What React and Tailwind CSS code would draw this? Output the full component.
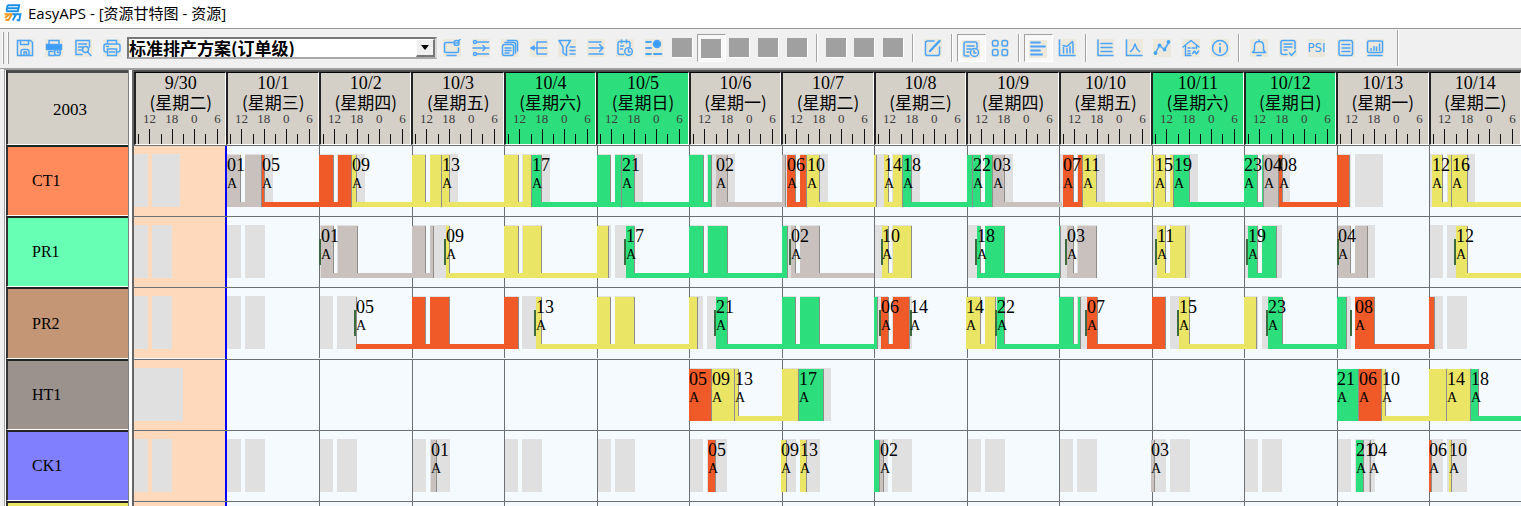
import React from "react";

const ORIGIN = 134;
const SPAN = 1387;
const pct = (x) => `${((x - ORIGIN) / SPAN) * 100}%`;
const wid = (w) => `${(w / SPAN) * 100}%`;

const O = "#f05a28";
const Y = "#ebe566";
const G = "#2ddf7c";
const T = "#c9c1bd";

const days = [
  ["9/30", "二"], ["10/1", "三"], ["10/2", "四"], ["10/3", "五"], ["10/4", "六"],
  ["10/5", "日"], ["10/6", "一"], ["10/7", "二"], ["10/8", "三"], ["10/9", "四"],
  ["10/10", "五"], ["10/11", "六"], ["10/12", "日"], ["10/13", "一"], ["10/14", "二"],
];

const allDays = days.map((_, i) => i);

// task: [label, colour, setup start, work segments, end of task]
const resources = [
  {
    name: "CT1", bg: "bg-[#ff8a5c]", days: allDays, shifts: [[0, 14], [18, 46]],
    tasks: [
      ["01", T, 0, [[227, 241], [245, 262]]],
      ["05", O, 0, [[262, 265], [319, 334], [338, 352]]],
      ["09", Y, 0, [[352, 357], [412, 426], [430, 442]]],
      ["13", Y, 0, [[442, 450], [504, 519], [523, 532]]],
      ["17", G, 0, [[532, 542], [597, 611], [615, 622]]],
      ["21", G, 0, [[622, 635], [689, 704], [708, 712]]],
      ["02", T, 0, [[716, 728], [782, 786]]],
      ["06", O, 0, [[787, 796], [800, 807]]],
      ["10", Y, 0, [[807, 820], [874, 877]]],
      ["14", Y, 0, [[884, 889], [893, 903]]],
      ["18", G, 0, [[903, 912], [967, 973]]],
      ["22", G, 0, [[973, 981], [985, 993]]],
      ["03", T, 0, [[993, 1005]], 1062],
      ["07", O, 0, [[1063, 1074], [1078, 1083]]],
      ["11", Y, 0, [[1083, 1097]], 1152],
      ["", Y, 0, [[1151, 1154]]],
      ["15", Y, 0, [[1155, 1166], [1170, 1174]]],
      ["19", G, 0, [[1174, 1190]], 1244],
      ["23", G, 0, [[1244, 1258], [1262, 1264]]],
      ["04", T, 0, [[1264, 1279]]],
      ["08", O, 0, [[1279, 1283], [1337, 1350]]],
      ["12", Y, 0, [[1432, 1443], [1448, 1452]]],
      ["16", Y, 0, [[1452, 1468]], 1530],
    ],
  },
  {
    name: "PR1", bg: "bg-[#66ffb3]", days: allDays, shifts: [[0, 14], [18, 38]],
    tasks: [
      ["01", T, 319, [[321, 334], [338, 358], [412, 426], [430, 434]]],
      ["09", Y, 444, [[446, 450], [504, 519], [523, 542], [597, 609]]],
      ["17", G, 624, [[626, 635], [689, 704], [708, 728], [782, 788]]],
      ["02", T, 789, [[791, 796], [800, 820]], 874],
      ["10", Y, 881, [[882, 889], [893, 912]]],
      ["18", G, 975, [[977, 981], [985, 1005]], 1061],
      ["", G, 0, [[1059, 1061]]],
      ["03", T, 1065, [[1067, 1074], [1078, 1097]]],
      ["11", Y, 1155, [[1157, 1166], [1170, 1186]]],
      ["19", G, 1246, [[1248, 1258], [1262, 1277]]],
      ["04", T, 1337, [[1338, 1351], [1355, 1368]]],
      ["12", Y, 1454, [[1456, 1468]], 1530],
    ],
  },
  {
    name: "PR2", bg: "bg-[#c49675]", days: allDays, shifts: [[0, 14], [18, 38]],
    tasks: [
      ["05", O, 354, [[356, 357], [412, 426], [430, 450], [504, 519]]],
      ["13", Y, 534, [[536, 542], [597, 611], [615, 635], [689, 698]]],
      ["21", G, 714, [[716, 728], [782, 796], [800, 820], [874, 878]]],
      ["06", O, 879, [[881, 889], [893, 910]]],
      ["14", Y, 910, [[910, 910]]],
      ["14", Y, 0, [[966, 981], [985, 996]]],
      ["22", G, 995, [[997, 1005], [1059, 1074], [1078, 1081]]],
      ["07", O, 1085, [[1087, 1098], [1152, 1166]]],
      ["15", Y, 1177, [[1179, 1190], [1244, 1257]]],
      ["23", G, 1266, [[1268, 1283], [1337, 1347]]],
      ["", O, 1350, [[1350, 1350]]],
      ["08", O, 0, [[1355, 1375], [1429, 1435]]],
    ],
  },
  {
    name: "HT1", bg: "bg-[#9b928e]", days: [0, 6, 7], shifts: [[0, 49]],
    tasks: [
      ["05", O, 0, [[689, 712]]],
      ["09", Y, 0, [[712, 735]]],
      ["13", Y, 0, [[735, 739], [782, 799]]],
      ["17", G, 0, [[799, 824]]],
      ["21", G, 0, [[1337, 1359]]],
      ["06", O, 0, [[1359, 1382]]],
      ["10", Y, 0, [[1382, 1386], [1429, 1447]]],
      ["14", Y, 0, [[1447, 1471]]],
      ["18", G, 0, [[1471, 1479]], 1530],
    ],
  },
  {
    name: "CK1", bg: "bg-[#8080ff]", days: allDays, shifts: [[0, 14], [18, 38]],
    tasks: [
      ["01", T, 0, [[431, 437]]],
      ["05", O, 0, [[708, 716]]],
      ["09", Y, 0, [[781, 787]]],
      ["13", Y, 0, [[800, 807]]],
      ["", G, 0, [[874, 880]]],
      ["02", T, 0, [[880, 884]]],
      ["03", T, 0, [[1151, 1155]]],
      ["21", G, 0, [[1356, 1364]]],
      ["04", T, 0, [[1369, 1371]]],
      ["06", O, 0, [[1429, 1432]]],
      ["10", Y, 0, [[1449, 1452]]],
    ],
  },
];

function Task({ task }) {
  const [, color, setup, parts, finish] = task;
  const start = parts[0][0];
  const end = finish || parts[parts.length - 1][1];
  return (
    <g shapeRendering="crispEdges">
      {end > start && <rect x={pct(start)} y="57" width={wid(end - start)} height="5" fill={color} />}
      {parts.filter(([a, b]) => b > a).map(([a, b]) => (
        <g key={a}>
          <rect x={pct(a)} y="10" width={wid(b - a)} height="52" fill={color} />
          <rect x={pct(b - 1)} y="10" width="1" height={b < end ? 47 : 52} fill="#8f8d8a" />
        </g>
      ))}
      {setup > 0 && <rect x={pct(setup)} y="23" width="2" height="26" fill="#3c6b40" />}
    </g>
  );
}

function Lane({ res }) {
  return (
    <svg className="block h-full w-full" role="img" aria-label={res ? res.name : undefined}>
      <g shapeRendering="crispEdges">
        <rect x="0" y="0" width={wid(92.5)} height="100%" fill="#ffd9bb" />
        {res && res.days.map((d) =>
          res.shifts.map(([a, b]) => (
            <rect key={`${d}-${a}`} x={pct(ORIGIN + d * 92.5 + a)} y="9" width={wid(b - a)} height="53" fill="#e0e0e0" />
          ))
        )}
        <rect x="0" y="0" width="100%" height="1" fill="#6c7074" />
        {allDays.slice(2).map((d) => (
          <rect key={d} x={pct(ORIGIN + d * 92.5)} y="0" width="1" height="100%" fill="#6c7074" />
        ))}
        <rect x={pct(225)} y="1" width="2" height="100%" fill="#0000ff" />
      </g>
      {res && res.tasks.map((t, i) => <Task key={i} task={t} />)}
      {res && (
        <g fill="#000" className="font-['Liberation_Serif',serif]">
          {res.tasks.filter((t) => t[0]).map((t) => (
            <g key={t[3][0][0]}>
              <text x={pct(t[3][0][0])} y="26" fontSize="18">{t[0]}</text>
              <text x={pct(t[3][0][0])} y="43" fontSize="14">A</text>
            </g>
          ))}
        </g>
      )}
    </svg>
  );
}

function DayHeader({ date, week, weekend }) {
  return (
    <div className={`flex flex-col items-center overflow-hidden border-l-2 border-t border-r border-b border-l-[#222] border-t-black border-r-white border-b-white ${weekend ? "bg-[#2ddf7c]" : "bg-[#d4d0c8]"}`}>
      <span className="h-5 whitespace-nowrap font-['Liberation_Serif',serif] text-[18px] leading-5">{date}</span>
      <span className="h-[18px] whitespace-nowrap font-['Noto_Sans_CJK_SC',sans-serif] text-[17px] leading-[18px]">(星期{week})</span>
      <svg className="block w-full flex-1" aria-hidden="true">
        <g fontSize="13" fill="#3d3d3d" textAnchor="middle" className="font-['Liberation_Serif',serif]">
          <text x="15%" y="12">12</text>
          <text x="40%" y="12">18</text>
          <text x="65%" y="12">0</text>
          <text x="91%" y="12">6</text>
        </g>
        <g shapeRendering="crispEdges">
          {[0, 1, 2, 3, 4, 5, 6, 7].map((k) => (
            <rect key={k} x={`${2.5 + k * 12.5}%`} y={k % 2 ? 18 : 23} width="1" height="20" fill="#111" />
          ))}
        </g>
      </svg>
    </div>
  );
}

const icons = {
  save: <><path d="M1.5 1.5h13l2 2v13h-15z" /><path d="M4.5 1.5v4h8v-4M5 16.5v-4q0-2 2-2h4q2 0 2 2v4M8 16v-3h2.500v3" /></>,
  printPreview: <><path d="M4 5V1.500h10V5M4 13v3.500h6" /><path d="M1.500 5.500h15v5h-15z" fill="#3d9bfa" /><circle cx="12.500" cy="13.500" r="3" fill="#ece9dc" /><path d="M12.500 12v1.500H14M4 12.500h4" /></>,
  search: <><path d="M8 15.500H2v-14h13.500V8M4.500 5h8M4.500 8h4M4.500 11h3" /><circle cx="11.500" cy="10.500" r="3" /><path d="m13.500 13 3.500 3.500" /></>,
  print: <><path d="M4.500 5V1.500h9V5M4.500 13H3q-2 0-2-2V7q0-2 2-2h12q2 0 2 2v4q0 2-2 2h-1.500" /><path d="M4.500 10h9v6.500h-9zM6.500 13h5M3.500 7.500h2" /></>,
  screen: <><path d="M10 3.500H3q-1.500 0-1.500 1.500v7q0 1.500 1.500 1.500h11q1.500 0 1.500-1.500V9M4 16.500h9" /><circle cx="13.500" cy="4" r="2.500" /><path d="M12.500 4h2M15.500 2l1.500-1.500" /></>,
  sliders: <><path d="M5 3h11.500M1 9h11M5 15h11.500M11 6.500 13.500 9 11 11.500" /><circle cx="3" cy="3" r="1.500" /><circle cx="3" cy="15" r="1.500" /><path d="M14.500 9H17" /></>,
  copy: <><rect x="1.500" y="5.500" width="11" height="11" rx="2" /><path d="M4 3.500h8.500q2 0 2 2V14M6.500 1.500h8q2 0 2 2V12M4 9h6M4 11.500h6M4 14h4" /></>,
  tree: <><path d="M7 3h9.500M1 9h15.500M7 15h9.500M7 3v12" /><path d="M1 9l3-2v4z" fill="#3d9bfa" /></>,
  filter: <><path d="M1 1.500h11.500L8.500 8v8.500L5 14V8zM12 8h5M12 11.500h5M12 15h5" /></>,
  arrowLines: <><path d="M2 3h12M2 9h14M2 15h14M12.500 5.500 16 9l-3.500 3.500" /></>,
  clockDoc: <><path d="M7.500 15.500H4q-2 0-2-2v-9q0-2 2-2h8q2 0 2 2v3M5.500 1v3M10.500 1v3M4.500 7h3M4.500 10h2" /><circle cx="12.500" cy="12.500" r="3.800" /><path d="M12.500 10.500v2.500H14" /></>,
  dot: <><path d="M1 3h5M1 9h5M1 15h5M9 15h7.500" strokeWidth="1.800" /><circle cx="12" cy="5" r="3.500" fill="#3d9bfa" /></>,
  edit: <><path d="M10 2H3.500q-2 0-2 2v10.500q0 2 2 2h10q2 0 2-2V8" /><path d="m6 12 9.500-10" strokeWidth="2.500" /></>,
  docClock: <><path d="M7 16H4q-2 0-2-2V4q0-2 2-2h9q2 0 2 2v4M5 6h7M5 9h4M5 12h2" /><circle cx="12.500" cy="12.500" r="4" /><path d="M12 10.500v2.500h2" /></>,
  grid: <><rect x="1.500" y="1.500" width="5.500" height="5.500" rx="1.800" /><rect x="11" y="1.500" width="5.500" height="5.500" rx="1.800" /><rect x="1.500" y="10.500" width="5.500" height="6" rx="1.800" /><rect x="11" y="10.500" width="5.500" height="6" rx="1.800" /></>,
  alignLeft: <><path d="M2 2.500h9M2 6.500h14M2 10.500h9M2 14.500h11" strokeWidth="1.800" /></>,
  chartBars: <><path d="M1.500 1v15.500H17M5.500 14V8.500M9 14V9.500M12 14V7.500M15 14V4M5 6.500l4 1 5.500-5" /></>,
  listAxis: <><path d="M2 1v15.500h15M5 4.500h11M5 8.500h11M5 12.500h11" /></>,
  peak: <><path d="M1.500 1v15.500H17M5.500 12.500 8 10l2-5 2 5 2.500 2.500" /></>,
  line: <><path d="M2 14.500 6.500 6.500l5 4L16 3" /><g fill="#3d9bfa"><circle cx="2.500" cy="14" r="1.200" /><circle cx="6.500" cy="6.500" r="1.200" /><circle cx="11.500" cy="10.500" r="1.200" /><circle cx="15.500" cy="3" r="1.200" /></g></>,
  house: <><path d="M1 8 9 1.500 17 8M3.500 7v9.500H9M6 9h2M10 9h3M6 12h2M6 14.500h2M14.500 7v2.500M10.500 14.500l2-2.500 2 3 2-3" /></>,
  info: <><circle cx="9" cy="9" r="7.500" /><path d="M9 8.500v4.500M9 5v.3" strokeWidth="1.800" /></>,
  bell: <><path d="M2.500 13.500h13l-2-2.500V7q0-4.500-4.500-4.500T4.500 7v4zM9 1v1.500M7 16.500h4" /></>,
  note: <><path d="M8 15.500H4q-2 0-2-2v-10q0-2 2-2h10q2 0 2 2V10M5 5h8M5 8h8M5 11h3M10.500 14l2 2.500 4-4.500" /></>,
  doc: <><rect x="2" y="1.500" width="13.500" height="15" rx="2" /><path d="M5 5.500h8M5 9h8M5 12.500h8" /></>,
  monitor: <><rect x="1.500" y="2" width="15" height="11.500" rx="1.500" /><path d="M2 16.500h14M5 11.500V9.500M8 11.500V7.500M10.500 11.500V8M13.500 11.500V5" /></>,
};

function ToolButton({ name, label, pressed }) {
  const frame = pressed
    ? "border-t border-l border-r border-b border-t-[#a0a0a0] border-l-[#a0a0a0] border-r-white border-b-white bg-[#f8f8f8] pt-0.5"
    : "";
  return (
    <button type="button" aria-label={label} aria-pressed={pressed} className={`flex h-7 items-center justify-center ${frame}`}>
      {name === "block" ? (
        <span className="h-5 w-[21px] border-r border-b border-white bg-[#a0a0a0]" />
      ) : name === "psi" ? (
        <span className="bg-[#ece9dc] font-['DejaVu_Sans_Condensed','DejaVu_Sans',sans-serif] text-[13px] leading-[18px] text-[#3d9bfa]">PSI</span>
      ) : (
        <svg viewBox="0 0 18 18" className="h-[18px] w-[18px] bg-[#ece9dc]" fill="none" stroke="#4ba4fb" strokeWidth="1.5" strokeLinecap="round" strokeLinejoin="round">
          {icons[name]}
        </svg>
      )}
    </button>
  );
}

const Separator = () => (
  <div className="flex h-7 w-[10px] justify-center">
    <span className="w-0.5 border-l border-r border-l-[#a5a5a5] border-r-white" />
  </div>
);

function Toolbar() {
  return (
    <div className="flex h-10 items-center overflow-hidden border-t border-[#979797] bg-[#f0f0f0] pb-0.5 [&>*]:shrink-0">
      <div className="flex h-8 w-[10px] items-stretch gap-[3px] pl-[2px]">
        <span className="w-0.5 border-l border-r border-l-white border-r-[#a0a0a0]" />
        <span className="w-0.5 border-l border-r border-l-white border-r-[#a0a0a0]" />
      </div>
      <div className="grid w-[116px] grid-cols-4">
        <ToolButton name="save" label="保存" />
        <ToolButton name="printPreview" label="打印设置" />
        <ToolButton name="search" label="打印预览" />
        <ToolButton name="print" label="打印" />
      </div>
      <div className="relative mx-px h-[22px] w-[310px]">
        <select aria-label="排产方案" className="block h-full w-full appearance-none border-2 border-t-[#777] border-l-[#777] border-r-[#d8d8d8] border-b-[#a8a8a8] bg-white font-['Noto_Sans_CJK_SC',sans-serif] text-[17px] leading-[18px] font-bold text-black outline-none">
          <option>标准排产方案(订单级)</option>
        </select>
        <span className="pointer-events-none absolute top-[2px] right-[2px] bottom-[2px] flex w-[19px] items-center justify-center border-t border-l border-r-2 border-b-2 border-t-white border-l-white border-r-[#777] border-b-[#777] bg-[#f0f0f0]">
          <svg viewBox="0 0 8 5" className="h-[5px] w-2"><path d="M0 0h8L4 5z" fill="#000" /></svg>
        </span>
      </div>
      <div className="grid w-[230px] grid-cols-8">
        <ToolButton name="screen" label="显示设置" />
        <ToolButton name="sliders" label="排程参数" />
        <ToolButton name="copy" label="复制" />
        <ToolButton name="tree" label="层级" />
        <ToolButton name="filter" label="筛选" />
        <ToolButton name="arrowLines" label="分派规则" />
        <ToolButton name="clockDoc" label="计划时间" />
        <ToolButton name="dot" label="标记" />
      </div>
      <div className="grid w-[144px] grid-cols-5">
        <ToolButton name="block" label="视图 1" />
        <ToolButton name="block" label="视图 2" pressed />
        <ToolButton name="block" label="视图 3" />
        <ToolButton name="block" label="视图 4" />
        <ToolButton name="block" label="视图 5" />
      </div>
      <Separator />
      <div className="grid w-[86px] grid-cols-3">
        <ToolButton name="block" label="模式 1" />
        <ToolButton name="block" label="模式 2" />
        <ToolButton name="block" label="模式 3" />
      </div>
      <Separator />
      <div className="grid w-[29px] grid-cols-1">
        <ToolButton name="edit" label="编辑" />
      </div>
      <Separator />
      <div className="grid w-[57px] grid-cols-2">
        <ToolButton name="docClock" label="时间表" pressed />
        <ToolButton name="grid" label="网格" />
      </div>
      <Separator />
      <div className="grid w-[57px] grid-cols-2">
        <ToolButton name="alignLeft" label="甘特图" pressed />
        <ToolButton name="chartBars" label="负荷图" />
      </div>
      <Separator />
      <div className="grid w-[143px] grid-cols-5">
        <ToolButton name="listAxis" label="资源图" />
        <ToolButton name="peak" label="峰值图" />
        <ToolButton name="line" label="折线图" />
        <ToolButton name="house" label="库存图" />
        <ToolButton name="info" label="信息" />
      </div>
      <Separator />
      <div className="grid w-[145px] grid-cols-5">
        <ToolButton name="bell" label="提醒" />
        <ToolButton name="note" label="检查" />
        <ToolButton name="psi" label="PSI" />
        <ToolButton name="doc" label="报表" />
        <ToolButton name="monitor" label="看板" />
      </div>
      <span className="ml-2 h-9 w-0.5 border-l border-r border-l-[#a5a5a5] border-r-white" />
    </div>
  );
}

function Logo() {
  return (
    <svg viewBox="0 0 18 18" className="h-[18px] w-[18px]" aria-hidden="true">
      <path d="M3.500 1.200h11.700l-1.300 6H2.300M4 4.200h10" fill="none" stroke="#1a8fe8" strokeWidth="1.900" />
      <path d="M3.700 1 2.500 7" stroke="#1a8fe8" strokeWidth="1.900" />
      <path d="M.5 10.200h7.200L4.500 16H1.500M5 10.500 1 14" fill="none" stroke="#f59a23" strokeWidth="1.900" />
      <path d="M8.500 10.200h8l-1.300 6h-2.500M12 10.500 8.700 16.500" fill="none" stroke="#1a8fe8" strokeWidth="1.900" />
    </svg>
  );
}

export default function App() {
  return (
    <div className="flex h-screen min-h-[506px] flex-col overflow-hidden bg-[#f0f0f0] text-black">
      <header className="flex h-7 shrink-0 items-center gap-1.5 bg-white pb-0.5 pl-1">
        <Logo />
        <h1 className="font-['Open_Sans','Noto_Sans_CJK_SC',sans-serif] text-[15px] leading-6">EasyAPS - [资源甘特图 - 资源]</h1>
      </header>
      <Toolbar />
      <main className="flex min-h-0 flex-1 flex-col border-t border-[#a0a0a0] pl-1">
        <div className="flex min-h-0 flex-1 flex-col border-t border-l border-[#a0a0a0] bg-white pl-px">
          <div className="flex h-[75px] shrink-0">
            <div className="flex w-[122px] shrink-0 items-center justify-center border-t-[3px] border-b border-l-2 border-t-[#4a4a4a] border-b-white border-l-[#333] bg-[#d4d0c8] pt-0.5 pl-1 font-['Liberation_Serif',serif] text-[17px]">
              2003
            </div>
            <div className="w-[6px] shrink-0 border-l border-r-2 border-l-[#808080] border-r-[#666] bg-white" />
            <div className="grid min-w-0 flex-1 grid-cols-[repeat(15,minmax(0,1fr))] border-t-2 border-[#4a4a4a]">
              {days.map(([date, week], i) => (
                <DayHeader key={date} date={date} week={week} weekend={[4, 5, 11, 12].includes(i)} />
              ))}
            </div>
          </div>
          {resources.map((res) => (
            <div key={res.name} className="flex min-h-[71px] flex-1">
              <div className={`flex w-[122px] shrink-0 items-center border-t-2 border-b border-l-2 border-t-[#222] border-b-white border-l-[#333] pl-6 font-['Liberation_Serif',serif] text-[16px] ${res.bg}`}>
                {res.name}
              </div>
              <div className="w-[6px] shrink-0 border-l border-r-2 border-l-[#808080] border-r-[#666] bg-white" />
              <div className="min-w-0 flex-1 overflow-hidden bg-[#f5faff]">
                <Lane res={res} />
              </div>
            </div>
          ))}
          <div className="flex h-[5px] shrink-0">
            <div className="w-[122px] shrink-0 border-t-2 border-l-2 border-t-[#222] border-l-[#333] bg-[#ebe566]" />
            <div className="w-[6px] shrink-0 border-l border-r-2 border-l-[#808080] border-r-[#666] bg-white" />
            <div className="min-w-0 flex-1 overflow-hidden bg-[#f5faff]">
              <Lane />
            </div>
          </div>
        </div>
      </main>
    </div>
  );
}
